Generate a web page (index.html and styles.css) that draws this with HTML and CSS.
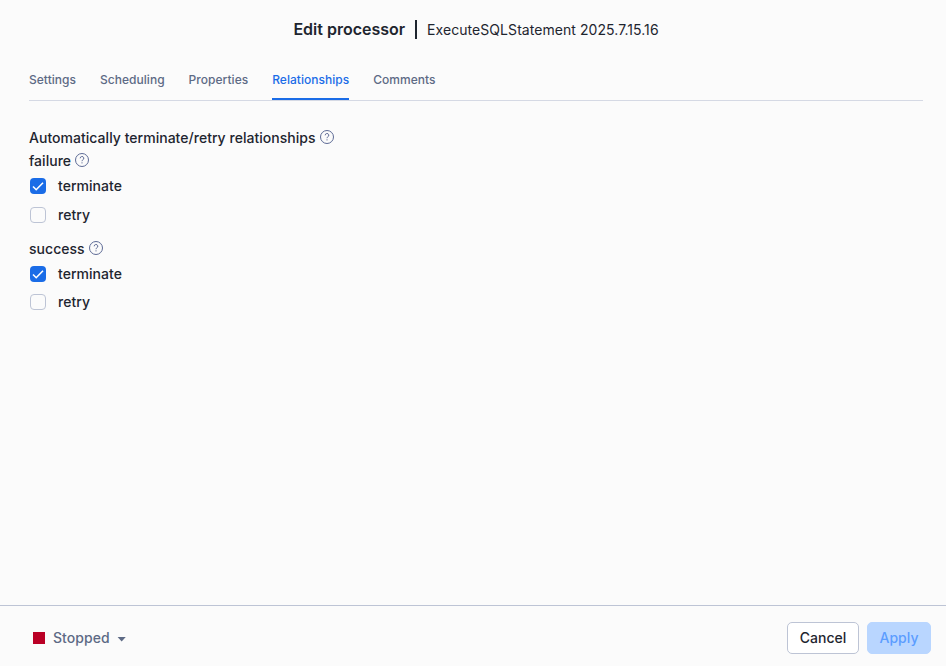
FILE: index.html
```html
<!DOCTYPE html>
<html lang="en">
<head>
<meta charset="utf-8">
<title>Edit processor</title>
<link rel="stylesheet" href="styles.css">
</head>
<body>
<div class="dialog">
  <header class="header">
    <h1 class="title">Edit processor</h1>
    <span class="divider"></span>
    <span class="subtitle">ExecuteSQLStatement 2025.7.15.16</span>
  </header>
  <nav class="tabs">
    <a class="tab">Settings</a>
    <a class="tab">Scheduling</a>
    <a class="tab">Properties</a>
    <a class="tab active">Relationships</a>
    <a class="tab">Comments</a>
  </nav>
  <main class="content">
    <div class="label first"><span>Automatically terminate/retry relationships</span><svg class="help" viewBox="0 0 14 14"><circle cx="7" cy="7" r="6.5"/><path d="M5.2 5.3a1.8 1.8 0 1 1 2.6 1.6c-.6.3-.8.6-.8 1.3M7 9.3v1.1"/></svg></div>
    <section class="group">
      <div class="label tight"><span>failure</span><svg class="help" viewBox="0 0 14 14"><circle cx="7" cy="7" r="6.5"/><path d="M5.2 5.3a1.8 1.8 0 1 1 2.6 1.6c-.6.3-.8.6-.8 1.3M7 9.3v1.1"/></svg></div>
      <div class="option"><span class="box checked"><svg viewBox="0 0 16 16"><path d="M3 8.5l3.2 3.2L13 4.8"/></svg></span><span class="name">terminate</span></div>
      <div class="option"><span class="box"></span><span class="name">retry</span></div>
    </section>
    <section class="group">
      <div class="label"><span>success</span><svg class="help" viewBox="0 0 14 14"><circle cx="7" cy="7" r="6.5"/><path d="M5.2 5.3a1.8 1.8 0 1 1 2.6 1.6c-.6.3-.8.6-.8 1.3M7 9.3v1.1"/></svg></div>
      <div class="option"><span class="box checked"><svg viewBox="0 0 16 16"><path d="M3 8.5l3.2 3.2L13 4.8"/></svg></span><span class="name">terminate</span></div>
      <div class="option"><span class="box"></span><span class="name">retry</span></div>
    </section>
  </main>
  <footer class="footer">
    <div class="status"><span class="square"></span><span class="state">Stopped</span><span class="caret"></span></div>
    <div class="actions"><button class="btn cancel">Cancel</button><button class="btn primary">Apply</button></div>
  </footer>
</div>
</body>
</html>
```
FILE: styles.css
```css
* { box-sizing: border-box; }
body { margin: 0; background: #fbfbfb; color: #1e252f; font-family: Inter, "Liberation Sans", sans-serif; font-size: 14px; }
.dialog { height: 666px; display: flex; flex-direction: column; }
.header { height: 60px; padding: 0 0 2px 6px; display: flex; align-items: center; justify-content: center; }
.title { margin: 0; font-size: 16px; font-weight: 600; line-height: 20px; }
.divider { width: 2px; height: 19px; margin: 0 10px; background: #1e252f; }
.subtitle { line-height: 20px; padding-top: 2px; letter-spacing: 0.06px; }
.tabs { margin: 0 23px 0 29px; height: 41px; display: flex; gap: 24px; border-bottom: 1px solid #d5d9e4; }
.tab { height: 40px; line-height: 39px; font-size: 12px; font-weight: 500; letter-spacing: 0.03px; color: #5d6a85; border-bottom: 2px solid transparent; }
.tab.active { color: #1a6ce7; border-bottom-color: #1a6ce7; }
.content { flex: 1; padding: 25px 29px; font-weight: 480; letter-spacing: 0.03px; }
.label { height: 22px; display: flex; align-items: center; gap: 4.5px; line-height: 22px; }
.first { height: 23px; margin-bottom: 1px; }
.tight { gap: 3.6px; }
.help { width: 14px; height: 14px; margin-bottom: 2px; fill: none; stroke: #5d6a95; stroke-width: 1; }
.group { margin-bottom: 9px; }
.option { height: 28.4px; display: flex; align-items: center; line-height: 17px; letter-spacing: 0.04px; }
.name { padding-bottom: 1px; }
.box { width: 16px; height: 16px; margin: 0 12px 0 1px; border: 1px solid #bdc4d5; border-radius: 4px; }
.checked { border: 0; background: #1a6ce7; }
.checked svg { display: block; width: 16px; height: 16px; fill: none; stroke: #fff; stroke-width: 1.6; }
.footer { height: 61px; border-top: 1px solid #bdc4d5; padding: 4px 15px 0 33px; display: flex; align-items: center; justify-content: space-between; font-weight: 500; }
.status { display: flex; align-items: center; color: #5d6a85; }
.square { width: 12px; height: 12px; background: #ba0025; margin-right: 8px; }
.state { padding-bottom: 2px; letter-spacing: 0.05px; }
.caret { width: 9px; height: 5px; margin: 2px 0 0 7.5px; background: #5d6a85; clip-path: polygon(0 0, 100% 0, 50% 100%); }
.actions { display: flex; gap: 8px; }
.btn { height: 32px; padding: 0 0 1px; border: 1px solid #bdc4d5; border-radius: 5px; background: #fff; color: #1e252f; font: 500 14px Inter, sans-serif; }
.cancel { width: 72px; }
.primary { width: 64px; border-color: #b9d6ff; background: #b9d6ff; color: #5c9dff; }
```
